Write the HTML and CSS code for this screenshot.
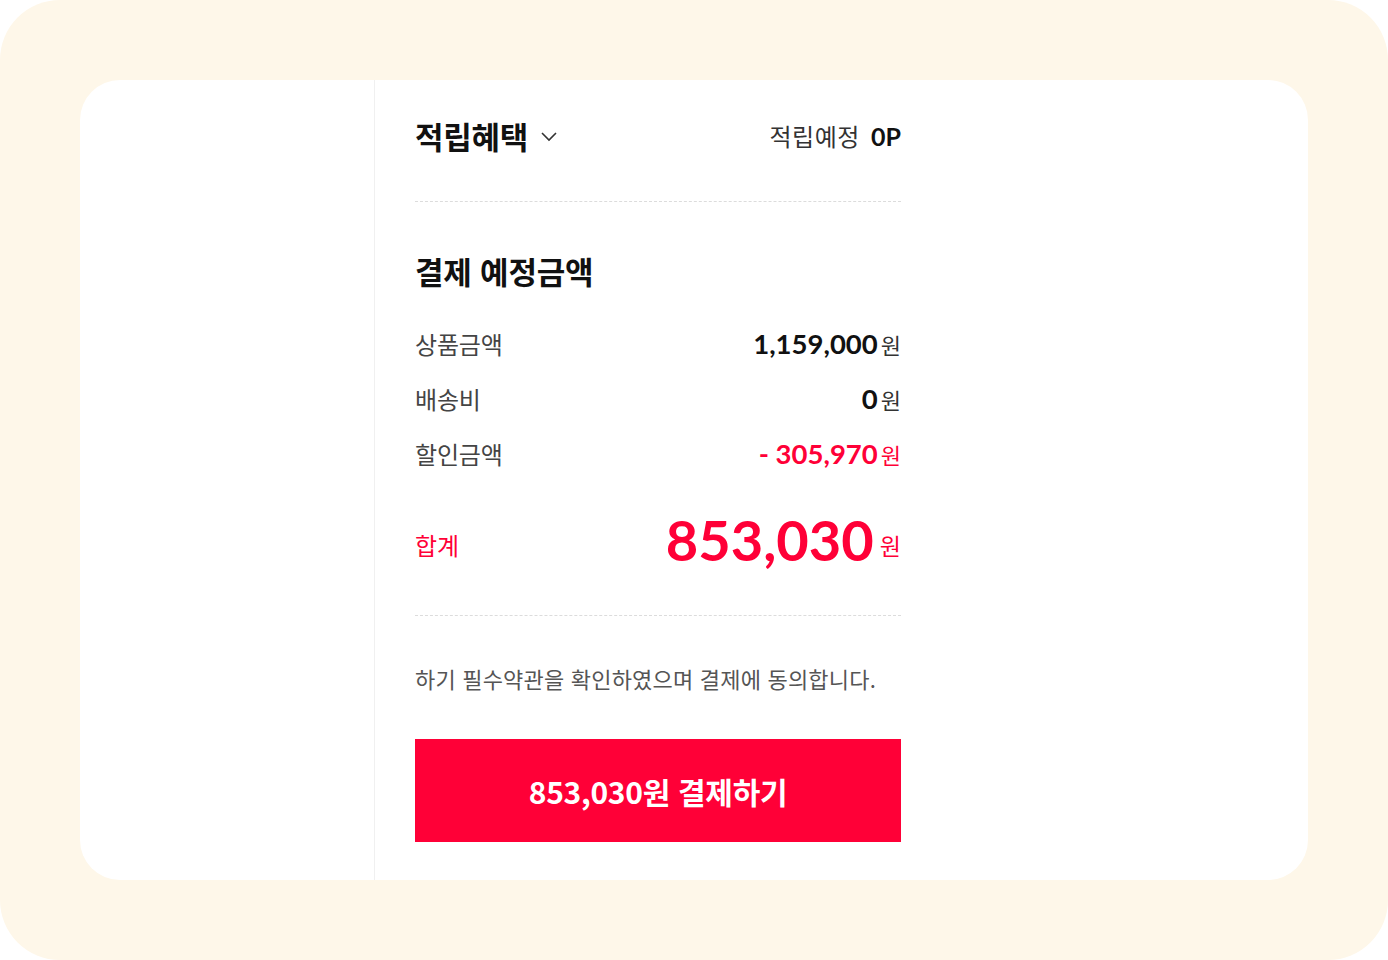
FILE: index.html
```html
<!DOCTYPE html>
<html lang="ko">

<head>
    <meta charset="UTF-8">
    <meta name="viewport" content="width=device-width, initial-scale=1.0">
    <title>결제 예정금액</title>
    <link rel="stylesheet" href="styles.css">
</head>

<body>
    <div class="frame">
        <div class="card">
            <div class="aside"></div>
            <div class="summary">
                <div class="benefit">
                    <div class="benefit_title">적립혜택
                        <svg class="arrow" width="18" height="12" viewBox="0 0 18 12">
                            <polyline points="2,3 9,10 16,3" fill="none" stroke="#333" stroke-width="1.6" />
                        </svg>
                    </div>
                    <div class="benefit_point">적립예정 <b>0P</b></div>
                </div>
                <div class="line"></div>

                <h2 class="pay_title">결제 예정금액</h2>
                <ul class="pay_list">
                    <li class="pay_row"><span class="label">상품금액</span><span class="price"><b>1,159,000</b>원</span></li>
                    <li class="pay_row"><span class="label">배송비</span><span class="price"><b>0</b>원</span></li>
                    <li class="pay_row"><span class="label">할인금액</span><span class="price font_red"><b>- 305,970</b>원</span></li>
                </ul>
                <div class="total">
                    <span class="total_label">합계</span>
                    <span class="total_price"><b>853,030</b><span class="won">원</span></span>
                </div>
                <div class="line line_wide"></div>

                <p class="agree">하기 필수약관을 확인하였으며 결제에 동의합니다.</p>
                <button class="pay_btn">853,030원 결제하기</button>
            </div>
        </div>
    </div>
</body>

</html>
```
FILE: styles.css
```css
* {
    box-sizing: border-box;
}

body {
    margin: 0;
    background: #fff;
    font-family: "Noto Sans CJK KR", "Noto Sans", sans-serif;
    color: #111;
}

.frame {
    width: 1388px;
    height: 960px;
    padding: 80px;
    background-color: #fef7e9;
    border-radius: 60px;
}

.card {
    display: flex;
    height: 800px;
    background-color: #fff;
    border-radius: 40px;
    overflow: hidden;
}

.aside {
    width: 295px;
    border-right: 1px solid #f0f0f0;
}

.summary {
    width: 566px;
    padding: 0 40px;
}

.benefit {
    display: flex;
    align-items: center;
    justify-content: space-between;
    height: 110px;
}

.benefit_title {
    display: flex;
    align-items: center;
    font-size: 31px;
    font-weight: 700;
    letter-spacing: -0.3px;
}

.arrow {
    margin-left: 12px;
    margin-top: 2px;
}

.benefit_point {
    font-size: 24px;
    color: #333;
    letter-spacing: 0.5px;
}

.benefit_point b {
    margin-left: 4px;
    font-family: "Lato", "Noto Sans CJK KR", sans-serif;
    font-size: 25px;
    color: #111;
    letter-spacing: 0;
}

.line {
    height: 0;
    margin-top: 11px;
    border-top: 1px dashed #dcdcdc;
}

.line_wide {
    margin-top: 40px;
}

.pay_title {
    margin: 49px 0 0;
    font-size: 31px;
    line-height: 40px;
    font-weight: 700;
    letter-spacing: -0.2px;
}

.pay_list {
    list-style: none;
    padding: 0;
    margin: 32px 0 0;
}

.pay_row {
    display: flex;
    align-items: center;
    justify-content: space-between;
    height: 40px;
    margin-bottom: 15px;
}

.label {
    font-size: 24px;
    color: #444;
    letter-spacing: -0.2px;
}

.price {
    font-size: 22px;
    color: #333;
}

.price b {
    margin-right: 3px;
    font-family: "Lato", "Noto Sans CJK KR", sans-serif;
    font-size: 27.5px;
    color: #111;
}

.font_red,
.font_red b {
    color: #ff0037;
}

.total {
    display: flex;
    align-items: baseline;
    justify-content: space-between;
    height: 70px;
    margin-top: 32px;
    color: #ff0037;
}

.total_label {
    align-self: flex-end;
    margin-bottom: 13px;
    font-size: 24px;
    line-height: 34px;
}

.total_price {
    font-size: 23px;
}

.total_price b {
    margin-right: 6px;
    font-family: "Lato", sans-serif;
    font-size: 56px;
    line-height: 70px;
}

.won {
    vertical-align: 6px;
}

.agree {
    margin: 46px 0 0;
    font-size: 22px;
    line-height: 32px;
    color: #555;
    letter-spacing: 0.2px;
}

.pay_btn {
    display: block;
    width: 100%;
    height: 103px;
    margin-top: 45px;
    border: 0;
    background-color: #ff0037;
    color: #fff;
    font-family: "Noto Sans CJK KR", sans-serif;
    font-size: 30px;
    font-weight: 700;
    letter-spacing: -0.3px;
}
```
